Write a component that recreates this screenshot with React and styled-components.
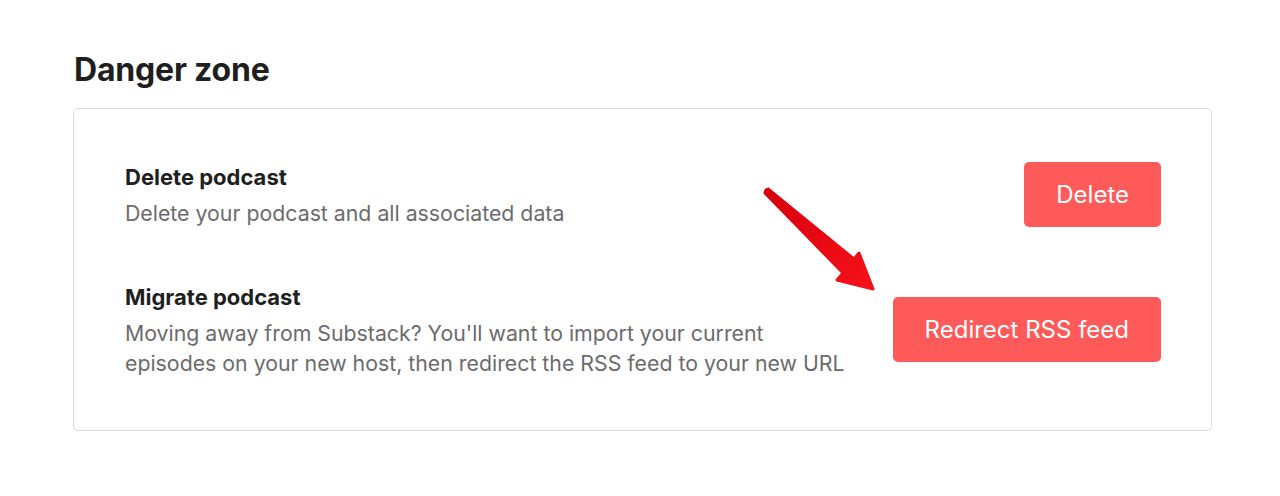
import styled, { createGlobalStyle } from "styled-components";

const GlobalStyle = createGlobalStyle`
  body {
    margin: 0;
    background: #fff;
    font-family: Inter, "Liberation Sans", sans-serif;
    -webkit-font-smoothing: antialiased;
  }
`;

const Page = styled.div`
  padding: 50px 68px 0 73px;
`;

const Heading = styled.h2`
  margin: 0 0 18px 1px;
  font-size: 32px;
  line-height: 40px;
  font-weight: 700;
  color: #1f1f1f;
  letter-spacing: -0.2px;
`;

const Card = styled.section`
  position: relative;
  border: 1px solid #d9d9d9;
  border-radius: 5px;
  padding: 52px 50px 52px 51px;
  display: flex;
  flex-direction: column;
  gap: 53px;
`;

const Row = styled.div`
  display: flex;
  align-items: center;
  justify-content: space-between;
  gap: 40px;
`;

const Info = styled.div`
  display: flex;
  flex-direction: column;
  gap: 7px;
  padding-top: 2px;
`;

const Title = styled.h3`
  margin: 0;
  font-size: 22px;
  line-height: 28px;
  font-weight: 700;
  color: #1f1f1f;
`;

const Desc = styled.p`
  margin: 0;
  max-width: 728px;
  font-size: 21.3px;
  line-height: 30px;
  color: #6b6b6b;
`;

const Button = styled.button`
  flex: none;
  height: 65px;
  padding: 0 32px;
  border: none;
  border-radius: 5px;
  background: #ff5a5a;
  color: #fff;
  font-family: inherit;
  font-size: 24px;
  cursor: pointer;
`;

const Arrow = styled.svg`
  position: absolute;
  left: 686px;
  top: 75px;
  pointer-events: none;
`;

export default function App() {
  return (
    <>
      <GlobalStyle />
      <Page>
        <Heading>Danger zone</Heading>
        <Card>
          <Row>
            <Info>
              <Title>Delete podcast</Title>
              <Desc>Delete your podcast and all associated data</Desc>
            </Info>
            <Button>Delete</Button>
          </Row>
          <Row>
            <Info>
              <Title>Migrate podcast</Title>
              <Desc>
                Moving away from Substack? You'll want to import your current
                episodes on your new host, then redirect the RSS feed to your new URL
              </Desc>
            </Info>
            <Button>Redirect RSS feed</Button>
          </Row>
          <Arrow width="125" height="115" viewBox="0 0 125 115">
            <defs>
              <linearGradient id="ar" x1="0" y1="0" x2="1" y2="1">
                <stop offset="0" stopColor="#d8000c" />
                <stop offset="1" stopColor="#f5121a" />
              </linearGradient>
            </defs>
            <path
              d="M6 6 L8 5 L94 75 L99 69 L113 105 L77 96 L83 89 L5 9 Z"
              fill="url(#ar)"
              strokeLinejoin="round"
              stroke="url(#ar)"
              strokeWidth="3"
            />
          </Arrow>
        </Card>
      </Page>
    </>
  );
}
